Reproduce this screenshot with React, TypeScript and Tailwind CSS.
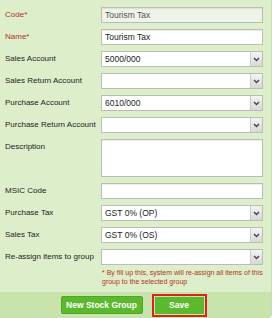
import React from 'react';

const font = { fontFamily: '"Liberation Sans", Arial, sans-serif' };

function Label({ text, required }: { text: string; required?: boolean }) {
  return (
    <div
      className={`w-[101px] shrink-0 pl-[5px] whitespace-nowrap text-[8px] leading-[16px] ${
        required ? 'text-[#b3301e]' : 'text-[#222]'
      }`}
    >
      {text}
      {required && '*'}
    </div>
  );
}

function TextBox({ value, disabled }: { value?: string; disabled?: boolean }) {
  return (
    <div
      className={`w-[162px] h-[16px] border border-[#b9bdb6] px-[3px] text-[8.5px] leading-[14px] whitespace-nowrap shadow-[inset_0_1px_1px_rgba(0,0,0,0.08)] ${
        disabled ? 'bg-[#eef4e8] text-[#555]' : 'bg-white text-[#222]'
      }`}
    >
      {value}
    </div>
  );
}

function SelectBox({ value }: { value?: string }) {
  return (
    <div className="w-[162px] h-[16px] border border-[#b9bdb6] bg-white flex text-[8.5px] leading-[14px] text-[#222] whitespace-nowrap">
      <div className="flex-1 px-[3px]">{value}</div>
      <div className="w-[12px] border-l border-[#c9ccc6] bg-gradient-to-b from-[#f4f4f4] to-[#d8d8d8] flex items-center justify-center">
        <svg width="7" height="5" viewBox="0 0 7 5">
          <path d="M1 1 L3.5 3.5 L6 1" stroke="#444" strokeWidth="1.4" fill="none" />
        </svg>
      </div>
    </div>
  );
}

function Row({ children }: { children: React.ReactNode }) {
  return <div className="flex items-start">{children}</div>;
}

export default function App() {
  return (
    <div className="w-[275px] h-[318px] bg-white" style={font}>
      <div className="w-[272px] h-[318px] bg-[#ddefca] border-r border-[#c7dcb3] rounded-br-[4px] flex flex-col overflow-hidden">
        <div className="flex-1 pt-[7px] flex flex-col gap-[6px]">
          <Row>
            <Label text="Code" required />
            <TextBox value="Tourism Tax" disabled />
          </Row>
          <Row>
            <Label text="Name" required />
            <TextBox value="Tourism Tax" />
          </Row>
          <Row>
            <Label text="Sales Account" />
            <SelectBox value="5000/000" />
          </Row>
          <Row>
            <Label text="Sales Return Account" />
            <SelectBox />
          </Row>
          <Row>
            <Label text="Purchase Account" />
            <SelectBox value="6010/000" />
          </Row>
          <Row>
            <Label text="Purchase Return Account" />
            <SelectBox />
          </Row>
          <Row>
            <Label text="Description" />
            <div className="w-[162px] h-[38px] border border-[#b9bdb6] bg-white shadow-[inset_0_1px_1px_rgba(0,0,0,0.08)]" />
          </Row>
          <Row>
            <Label text="MSIC Code" />
            <TextBox />
          </Row>
          <Row>
            <Label text="Purchase Tax" />
            <SelectBox value="GST 0% (OP)" />
          </Row>
          <Row>
            <Label text="Sales Tax" />
            <SelectBox value="GST 0% (OS)" />
          </Row>
          <div>
            <Row>
              <Label text="Re-assign items to group" />
              <SelectBox />
            </Row>
            <div className="ml-[102px] mt-[3px] w-[165px] text-[7px] leading-[9px] text-[#b3301e]">
              * By fill up this, system will re-assign all items of this group to the selected group
            </div>
          </div>
        </div>
        <div className="h-[26px] shrink-0 bg-[#c9e3ac] flex items-center justify-center gap-[9px] pr-[4px]">
          <button className="w-[82px] h-[18px] bg-[#5cb82c] text-white font-bold text-[8.5px] rounded-[2px] border border-[#4ea424] whitespace-nowrap">
            New Stock Group
          </button>
          <div className="border-2 border-[#d8241c] p-[1px]">
            <button className="w-[49px] h-[17px] bg-[#5cb82c] text-white font-bold text-[8.5px] block">
              Save
            </button>
          </div>
        </div>
      </div>
    </div>
  );
}
